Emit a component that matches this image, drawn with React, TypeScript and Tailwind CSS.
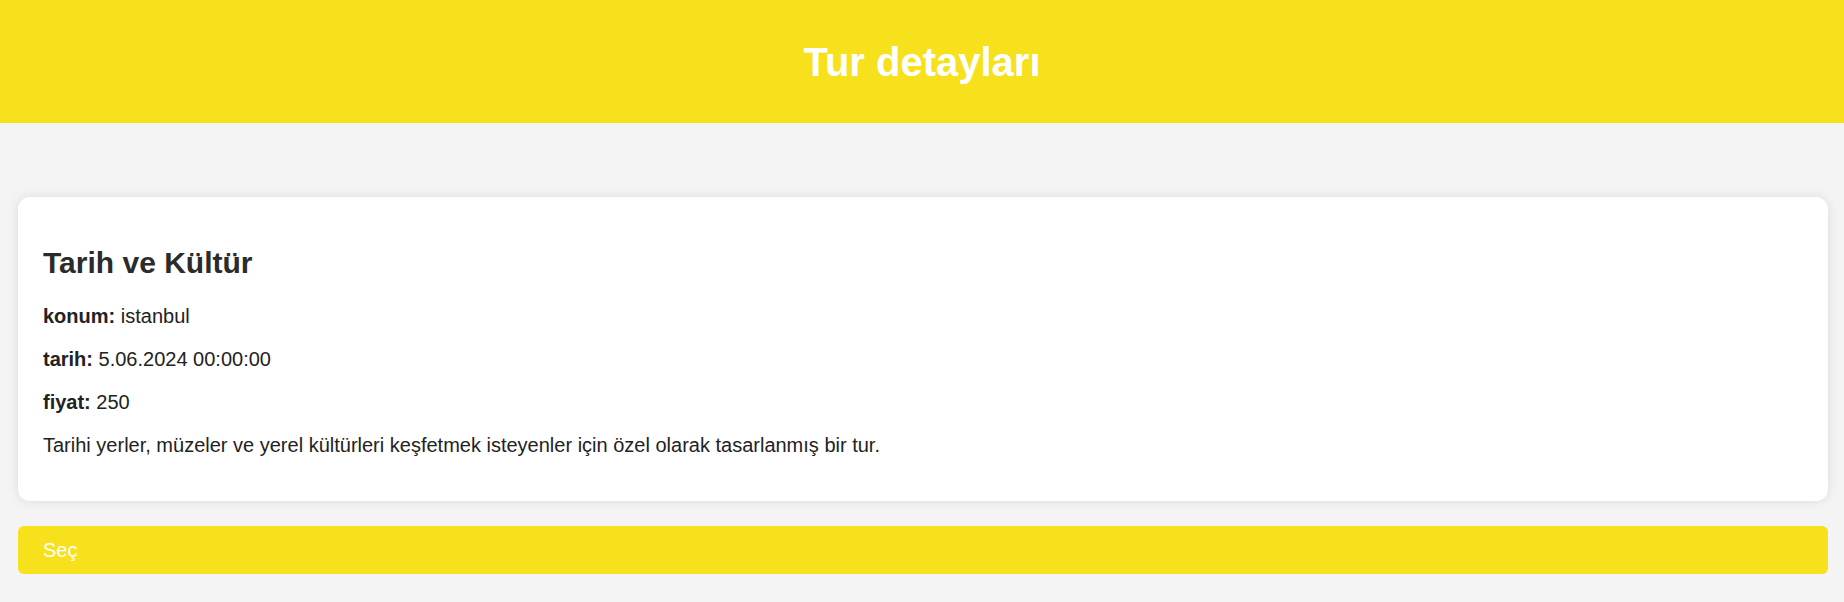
export default function App() {
  const rows = [
    { label: 'konum:', value: 'istanbul' },
    { label: 'tarih:', value: '5.06.2024 00:00:00' },
    { label: 'fiyat:', value: '250' },
  ];

  return (
    <div className="min-h-screen bg-[#f4f4f4] font-['Liberation_Sans',Arial,sans-serif]">
      {/* Header */}
      <header className="h-[123px] bg-[#f7e01c] flex items-center justify-center">
        <h1 className="text-[40px] leading-[46px] font-bold text-white">Tur detayları</h1>
      </header>

      <main className="pl-[18px] pr-[16px] pt-[74px]">
        {/* Tour card */}
        <div className="bg-white rounded-[12px] shadow-[0_0_12px_rgba(0,0,0,0.1)] px-[25px] pt-[49px] pb-[44px]">
          <h2 className="text-[30px] leading-[34.5px] font-bold text-[#2b2b2b]">Tarih ve Kültür</h2>
          <div className="mt-[24px] flex flex-col gap-[20.3px] text-[20px] leading-[23px] text-[#222]">
            {rows.map((r) => (
              <p key={r.label}>
                <strong className="font-bold">{r.label}</strong> {r.value}
              </p>
            ))}
            <p>Tarihi yerler, müzeler ve yerel kültürleri keşfetmek isteyenler için özel olarak tasarlanmış bir tur.</p>
          </div>
        </div>

        <button className="mt-[25px] w-full h-[48px] rounded-[6px] bg-[#f7e01c] text-white text-[20px] text-left px-[25px]">
          Seç
        </button>
      </main>
    </div>
  );
}
